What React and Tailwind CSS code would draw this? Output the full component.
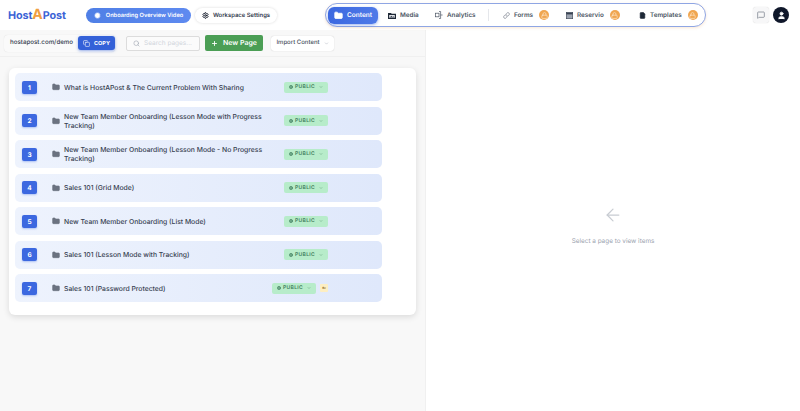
import React from "react";
import { Folder, Search, Plus, ChevronDown, Copy, Settings, Globe, Link, FileText, Lock, MessageSquare, User, ArrowLeft, PlayCircle } from "lucide-react";

const rows = [
  "What is HostAPost & The Current Problem With Sharing",
  "New Team Member Onboarding (Lesson Mode with Progress Tracking)",
  "New Team Member Onboarding (Lesson Mode - No Progress Tracking)",
  "Sales 101 (Grid Mode)",
  "New Team Member Onboarding (List Mode)",
  "Sales 101 (Lesson Mode with Tracking)",
  "Sales 101 (Password Protected)",
];

function MediaIcon() {
  return (
    <svg width="8" height="7" viewBox="0 0 8 7" className="shrink-0">
      <path d="M0 1 H3 L3.7 1.8 H8 V7 H0 Z" fill="#1f2937" />
      <rect x="1.2" y="3" width="5.6" height="2.8" fill="#e5e7eb" />
      <path d="M1.6 5.6 L3.4 3.8 L4.6 5 L5.4 4.3 L6.6 5.6 Z" fill="#374151" />
    </svg>
  );
}

function AnalyticsIcon() {
  return (
    <svg width="8" height="8" viewBox="0 0 8 8" fill="none" stroke="#4b5563" strokeWidth="0.7" className="shrink-0">
      <rect x="0.4" y="2.2" width="3.6" height="3.6" />
      <path d="M4 0.5 H5.6 V7.5 H4 M5.6 4 H7.6" />
    </svg>
  );
}

function CalendarIcon() {
  return (
    <svg width="7" height="7" viewBox="0 0 7 7" className="shrink-0">
      <rect x="0.3" y="0.6" width="6.4" height="6.1" fill="#9ca3af" stroke="#374151" strokeWidth="0.6" />
      <rect x="0.3" y="0.6" width="6.4" height="1.8" fill="#374151" />
    </svg>
  );
}

function LockBadge() {
  return (
    <span className="flex h-[10px] w-[10px] items-center justify-center rounded-full bg-[#f0a650]">
      <Lock size={7} color="#fde8cc" strokeWidth={2.2} />
    </span>
  );
}

function NavItem({ icon, label, lock, className }) {
  return (
    <div className={"flex items-center gap-[4px] text-[6.3px] leading-[10px] font-semibold text-[#4b5563] " + (className || "")}>
      {icon}
      <span>{label}</span>
      {lock && <span className="ml-[2px]"><LockBadge /></span>}
    </div>
  );
}

function Row({ n, title, extra }) {
  return (
    <div className="flex h-[28px] w-[367px] items-center rounded-[5px] bg-gradient-to-r from-[#eef3fd] to-[#dfe8fb] pl-[7px]">
      <div className="flex h-[13px] w-[15px] shrink-0 items-center justify-center rounded-[2px] bg-[#3c68e0] pt-[1px] text-[6.5px] leading-[8px] font-bold text-white shadow-[0_1px_2px_rgba(60,104,224,0.35)]">
        {n}
      </div>
      <Folder size={8} fill="#6b7280" color="#6b7280" className="ml-[15px] shrink-0" />
      <div className="ml-[4px] w-[220px] shrink-0 pr-[18px] text-[6.8px] leading-[9px] font-medium text-[#374151]">{title}</div>
      <div className={"flex flex-1 items-center gap-[4px] " + (extra ? "-ml-[12px]" : "")}>
        <div className="flex h-[11px] w-[44px] items-center justify-center gap-[2px] rounded-[2px] bg-[#b7ecca] text-[5px] leading-[7px] font-semibold tracking-[0.3px] text-[#3f7d5c]">
          <Globe size={4} strokeWidth={3} />
          <span className="pt-[1px]">PUBLIC</span>
          <ChevronDown size={4} className="ml-[2px]" />
        </div>
        {extra && (
          <div className="flex h-[8px] w-[8px] items-center justify-center rounded-[1px] bg-[#fdeec2] text-[3px] leading-[4px] font-bold text-[#92702a]">
            6v
          </div>
        )}
      </div>
    </div>
  );
}

export default function App() {
  return (
    <div className="flex h-[411px] w-[800px] flex-col overflow-hidden bg-white font-['Inter',sans-serif] antialiased [text-rendering:geometricPrecision]">
      <header className="relative flex h-[30px] shrink-0 items-center bg-white pl-[8px]">
        <div className="w-[78px] shrink-0 text-[10.8px] leading-none font-bold tracking-[-0.1px] text-[#3b63d6]">
          Host<span className="text-[14px] text-[#f0a040]">A</span>Post
        </div>
        <div className="flex h-[15px] w-[105px] shrink-0 items-center justify-center gap-[5px] rounded-full bg-gradient-to-r from-[#4f7fe6] to-[#5e8af0] text-[5.7px] leading-[10px] font-semibold text-white">
          <PlayCircle size={7} fill="white" color="#5e8af0" />
          <span className="pt-[1px]">Onboarding Overview Video</span>
        </div>
        <div className="ml-[4px] flex h-[15px] w-[82px] shrink-0 items-center justify-center gap-[4px] rounded-full bg-white text-[5.9px] leading-[10px] font-semibold text-[#374151] shadow-[0_0_3px_rgba(0,0,0,0.15)]">
          <Settings size={7} color="#111827" strokeWidth={3} />
          <span className="pt-[1px]">Workspace Settings</span>
        </div>
        <nav className="ml-[48px] flex h-[24px] w-[381px] shrink-0 items-center rounded-[12px] border border-[#8fa6e4] bg-white pl-[2px] shadow-[0_1px_3px_rgba(240,180,120,0.3)]">
          <div className="flex h-[17px] w-[50px] shrink-0 items-center justify-center gap-[4px] rounded-[6px] bg-gradient-to-r from-[#3c68e0] to-[#4f7ae8] text-[6.5px] leading-[10px] font-semibold text-white shadow-[0_1px_3px_rgba(60,104,224,0.5)]">
            <Folder size={9} fill="white" color="white" />
            Content
          </div>
          <NavItem className="ml-[10px] w-[45px]" icon={<MediaIcon />} label="Media" />
          <NavItem className="ml-[2px] w-[52px]" icon={<AnalyticsIcon />} label="Analytics" />
          <div className="ml-[1px] h-[12px] w-px bg-[#e5e7eb]" />
          <NavItem className="ml-[14px] w-[63px]" icon={<Link size={7} color="#6b7280" />} label="Forms" lock />
          <NavItem className="w-[73px]" icon={<CalendarIcon />} label="Reservio" lock />
          <NavItem className="" icon={<FileText size={7} color="#1f2937" fill="#1f2937" />} label="Templates" lock />
        </nav>
        <div className="ml-[47px] flex h-[16px] w-[16px] shrink-0 items-center justify-center rounded-[3px] bg-[#f7f7f8] shadow-[0_0_1px_rgba(0,0,0,0.2)]">
          <MessageSquare size={8} color="#6b7280" />
        </div>
        <div className="ml-[4px] flex h-[16px] w-[16px] shrink-0 items-center justify-center rounded-full bg-[#0f172a]">
          <User size={9} fill="white" color="white" />
        </div>
      </header>

      <main className="flex min-h-0 flex-1">
        <section className="flex w-[426px] shrink-0 flex-col border-r border-[#f0f0f0] bg-[#f8f8f8]">
          <div className="flex h-[27px] shrink-0 items-center border-b border-[#f0f0f0] pl-[4px]">
            <div className="flex h-[17px] w-[111px] shrink-0 items-center rounded-[4px] bg-[#fafafa] pl-[6px] shadow-[0_0_1px_rgba(0,0,0,0.15)]">
              <span className="w-[68px] text-[6.2px] leading-[10px] whitespace-nowrap font-medium text-[#374151]">hostapost.com/demo</span>
              <div className="flex h-[14px] w-[37px] items-center justify-center gap-[4px] rounded-[3px] bg-[#3461d8] text-[5.5px] leading-[8px] font-bold text-white shadow-[0_1px_3px_rgba(52,97,216,0.5)]">
                <Copy size={7} />
                <span className="pt-[1px]">COPY</span>
              </div>
            </div>
            <div className="ml-[11px] flex h-[15px] w-[74px] shrink-0 items-center gap-[4px] rounded-[2px] border border-[#dcdcdc] bg-[#fbfbfb] pl-[6px] text-[6.5px] leading-[10px] text-[#d1d5db]">
              <Search size={7} color="#9ca3af" />
              Search pages...
            </div>
            <div className="ml-[5px] flex h-[16px] w-[58px] shrink-0 items-center justify-center gap-[5px] rounded-[2px] bg-[#4b9e55] text-[7px] leading-[10px] font-semibold text-white">
              <Plus size={7} strokeWidth={3} />
              New Page
            </div>
            <div className="ml-[8px] flex h-[15px] w-[63px] shrink-0 items-center justify-center gap-[4px] rounded-[3px] bg-white text-[6px] leading-[10px] font-medium text-[#4b5563] shadow-[0_0_1px_rgba(0,0,0,0.25)]">
              Import Content
              <ChevronDown size={5} color="#9ca3af" />
            </div>
          </div>
          <div className="mt-[11px] ml-[9px] flex h-[247px] w-[407px] flex-col gap-[5.5px] rounded-[6px] bg-white pt-[5px] pl-[6px] shadow-[0_2px_6px_rgba(0,0,0,0.12)]">
            {rows.map((t, i) => (
              <Row key={i} n={i + 1} title={t} extra={i === 6} />
            ))}
          </div>
        </section>
        <section className="flex flex-1 flex-col items-center bg-white pt-[175px]">
          <ArrowLeft size={20} color="#c8ccd2" strokeWidth={1.5} />
          <p className="mt-[11px] text-[6.4px] leading-[10px] text-[#9ca3af]">Select a page to view items</p>
        </section>
      </main>
    </div>
  );
}
